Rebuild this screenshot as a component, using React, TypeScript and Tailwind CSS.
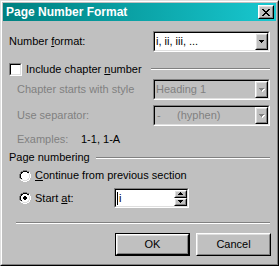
import React from "react";

type P = { className?: string; children?: React.ReactNode };

const Raised = ({ className = "", children }: P) => (
  <div className={`border border-t-white border-l-white border-r-black border-b-black ${className}`}>
    <div className="w-full h-full border border-t-[#dfdfdf] border-l-[#dfdfdf] border-r-[#808080] border-b-[#808080] bg-[#c0c0c0] flex items-center justify-center">
      {children}
    </div>
  </div>
);

const Sunken = ({ className = "", inner = "bg-white", children }: P & { inner?: string }) => (
  <div className={`border border-t-[#808080] border-l-[#808080] border-r-white border-b-white ${className}`}>
    <div className={`w-full h-full border border-t-black border-l-black border-r-[#dfdfdf] border-b-[#dfdfdf] flex items-center ${inner}`}>
      {children}
    </div>
  </div>
);

const Arrow = ({ up = false, disabled = false }: { up?: boolean; disabled?: boolean }) => {
  const rows = up
    ? [
        [2, 0, 1],
        [1, 1, 3],
        [0, 2, 5],
      ]
    : [
        [0, 0, 5],
        [1, 1, 3],
        [2, 2, 1],
      ];
  return (
    <svg width="6" height="4" viewBox="0 0 6 4" shapeRendering="crispEdges">
      {disabled &&
        rows.map(([x, y, w], i) => <rect key={"s" + i} x={x + 1} y={y + 1} width={w} height={1} fill="#ffffff" />)}
      {rows.map(([x, y, w], i) => (
        <rect key={i} x={x} y={y} width={w} height={1} fill={disabled ? "#808080" : "#000000"} />
      ))}
    </svg>
  );
};

const Sep = ({ className = "" }: { className?: string }) => (
  <div className={`h-[2px] border-t border-b border-t-[#808080] border-b-white ${className}`} />
);

const Combo = ({ text, disabled = false }: { text: React.ReactNode; disabled?: boolean }) => (
  <Sunken className="ml-auto w-[117px] h-[21px]" inner={disabled ? "bg-[#c0c0c0]" : "bg-white"}>
    <div className={`flex-1 pl-[1px] whitespace-pre ${disabled ? "text-[#808080]" : "text-black"}`}>{text}</div>
    <Raised className="w-[13px] h-[17px]">
      <Arrow disabled={disabled} />
    </Raised>
  </Sunken>
);

const radioMap = [
  "....GGGG....",
  "..GGKKKKGG..",
  ".GKKiiiiKKW.",
  ".GKiiiiiiLW.",
  "GKiiiiiiiiLW",
  "GKiiiiiiiiLW",
  "GKiiiiiiiiLW",
  "GKiiiiiiiiLW",
  ".GKiiiiiiLW.",
  ".WLLiiiiLLW.",
  "..WWLLLLWW..",
  "....WWWW....",
];
const colors: Record<string, string> = { G: "#808080", K: "#000000", W: "#ffffff", L: "#dfdfdf", i: "#ffffff" };
const dot = [
  [5, 4, 2],
  [4, 5, 4],
  [4, 6, 4],
  [5, 7, 2],
];

const Radio = ({ checked = false }: { checked?: boolean }) => (
  <svg width="12" height="12" viewBox="0 0 12 12" shapeRendering="crispEdges" className="ml-[10px] shrink-0">
    {radioMap.map((row, y) =>
      row.split("").map((c, x) =>
        colors[c] ? <rect key={`${x}-${y}`} x={x} y={y} width={1} height={1} fill={colors[c]} /> : null
      )
    )}
    {checked && dot.map(([x, y, w], i) => <rect key={"d" + i} x={x} y={y} width={w} height={1} fill="#000" />)}
  </svg>
);

const xMap = ["XX....XX", ".XX..XX.", "..XXXX..", "...XX...", "..XXXX..", ".XX..XX.", "XX....XX"];

export default function App() {
  return (
    <div className="w-[279px] h-[266px] bg-[#c0c0c0] font-['Liberation_Sans',Arial,sans-serif] text-[11px] leading-[13px] text-black border border-t-[#dfdfdf] border-l-[#dfdfdf] border-r-black border-b-black">
      <div className="w-full h-full border border-t-white border-l-white border-r-[#808080] border-b-[#808080] p-px flex flex-col">
        {/* Title bar */}
        <div className="h-[18px] flex items-center bg-gradient-to-r from-[#008080] to-[#18c8d0] pl-[3px]">
          <span className="text-white font-bold text-[12px] leading-[14px]">Page Number Format</span>
          <Raised className="ml-auto mr-[2px] w-[16px] h-[14px]">
            <svg width="8" height="7" viewBox="0 0 8 7" shapeRendering="crispEdges">
              {xMap.map((row, y) =>
                row.split("").map((c, x) =>
                  c === "X" ? <rect key={`${x}-${y}`} x={x} y={y} width={1} height={1} fill="#000" /> : null
                )
              )}
            </svg>
          </Raised>
        </div>

        <div className="flex flex-col px-[6px]">
          {/* Number format */}
          <div className="mt-[10px] h-[21px] flex items-center">
            <span>
              Number <span className="underline underline-offset-[1px]">f</span>ormat:
            </span>
            <Combo text="i, ii, iii, ..." />
          </div>

          {/* Include chapter number */}
          <div className="mt-[11px] h-[13px] flex items-center">
            <Sunken className="w-[13px] h-[13px] shrink-0" />
            <span className="ml-[4px]">
              Include chapter <span className="underline underline-offset-[1px]">n</span>umber
            </span>
            <Sep className="ml-auto w-[119px] self-start mt-[5px]" />
          </div>

          {/* Chapter starts with style */}
          <div className="mt-[3px] h-[21px] flex items-center">
            <span className="ml-[8px] text-[#808080]">Chapter starts with style</span>
            <Combo text="Heading 1" disabled />
          </div>

          {/* Use separator */}
          <div className="mt-[5px] h-[21px] flex items-center">
            <span className="ml-[8px] text-[#808080]">Use separator:</span>
            <Combo
              disabled
              text={
                <span className="flex">
                  <span className="w-[21px] pl-[1px]">-</span>
                  <span>(hyphen)</span>
                </span>
              }
            />
          </div>

          {/* Examples */}
          <div className="mt-[7px] h-[13px] flex items-center">
            <span className="ml-[8px] w-[64px] text-[#808080]">Examples:</span>
            <span>1-1, 1-A</span>
          </div>

          {/* Page numbering */}
          <div className="mt-[5px] h-[13px] flex items-center">
            <span>Page numbering</span>
            <Sep className="flex-1 ml-[6px] self-start mt-[6px]" />
          </div>

          {/* Continue */}
          <div className="mt-[5px] h-[13px] flex items-center">
            <Radio />
            <span className="ml-[4px]">
              <span className="underline underline-offset-[1px]">C</span>ontinue from previous section
            </span>
          </div>

          {/* Start at */}
          <div className="mt-[6px] h-[20px] flex items-center">
            <Radio checked />
            <span className="ml-[4px] w-[79px]">
              Start <span className="underline underline-offset-[1px]">a</span>t:
            </span>
            <Sunken className="w-[75px] h-[20px]">
              <div className="flex-1 flex items-center pl-[1px] h-full">
                <span className="w-px h-[13px] bg-black" />
                <span className="pl-[1px]">i</span>
              </div>
              <div className="flex flex-col h-full">
                <Raised className="w-[13px] h-[8px]">
                  <Arrow up />
                </Raised>
                <Raised className="w-[13px] h-[8px]">
                  <Arrow />
                </Raised>
              </div>
            </Sunken>
          </div>

          <Sep className="mt-[14px] ml-[7px]" />

          {/* Buttons */}
          <div className="mt-[9px] flex justify-end gap-[6px] mr-[-1px]">
            <div className="w-[75px] h-[23px] border border-black">
              <Raised className="w-full h-full">OK</Raised>
            </div>
            <Raised className="w-[75px] h-[23px]">Cancel</Raised>
          </div>
        </div>
      </div>
    </div>
  );
}
